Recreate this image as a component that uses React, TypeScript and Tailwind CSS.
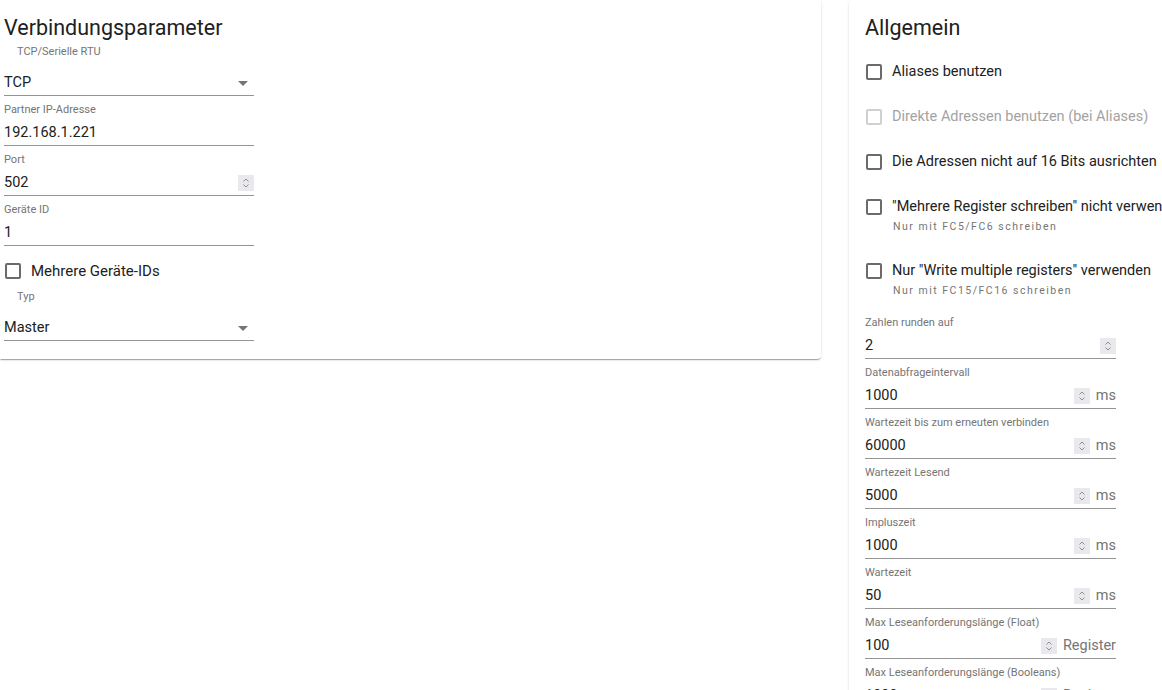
const font = { fontFamily: 'Roboto, "Liberation Sans", Arial, sans-serif' }

function Spinner() {
  return (
    <span className="flex h-[16px] w-[16px] shrink-0 items-center justify-center bg-[#e9e9ed]">
      <svg width="16" height="16" viewBox="0 0 16 16" fill="none">
        <path d="M5.5 6.5L8 4L10.5 6.5" stroke="#8f8f8f" strokeWidth="1" />
        <path d="M5.5 9.5L8 12L10.5 9.5" stroke="#8f8f8f" strokeWidth="1" />
      </svg>
    </span>
  )
}

function Arrow() {
  return (
    <svg width="24" height="24" viewBox="0 0 24 24" className="-mr-[1px] shrink-0">
      <path d="M7 10l5 5 5-5z" fill="#757575" />
    </svg>
  )
}

function Field({
  label,
  value,
  unit,
  spinner,
  width = 'w-[250px]',
  first,
}: {
  label: string
  value: string
  unit?: string
  spinner?: boolean
  width?: string
  first?: string
}) {
  return (
    <div className={width}>
      <div className={`${first ?? 'mt-[7px]'} h-[14px] text-[11px] leading-[14px] text-[#757575] whitespace-nowrap`}>
        {label}
      </div>
      <div className="flex h-[29px] items-center border-b border-[#949494] pt-[3px]">
        <span className="flex-1 text-[14.5px] text-[#212121]">{value}</span>
        {spinner && <Spinner />}
        {unit && <span className="ml-[6px] text-[14.5px] text-[#757575]">{unit}</span>}
      </div>
    </div>
  )
}

function Select({ label, value }: { label: string; value: string }) {
  return (
    <div className="w-[250px]">
      <div className="h-[14px] pl-[13px] text-[11px] leading-[14px] text-[#757575]">{label}</div>
      <div className="mt-[8px] flex h-[29px] items-center border-b border-[#949494] pt-[3px]">
        <span className="flex-1 text-[14.5px] text-[#212121]">{value}</span>
        <Arrow />
      </div>
    </div>
  )
}

function Check({ label, disabled, helper, mt }: { label: string; disabled?: boolean; helper?: string; mt: string }) {
  return (
    <div className={mt}>
      <div className="flex h-[18px] items-center whitespace-nowrap">
        <span
          className={`ml-[1px] h-[16px] w-[16px] shrink-0 rounded-[2px] border-2 ${
            disabled ? 'border-[#d0d0d0]' : 'border-[#6b6b6b]'
          }`}
        />
        <span className={`ml-[10px] text-[14.5px] ${disabled ? 'text-[#a3a3a3]' : 'text-[#212121]'}`}>{label}</span>
      </div>
      {helper && (
        <div className="ml-[28px] mt-[5px] h-[12px] text-[10.5px] leading-[12px] tracking-[1.5px] text-[#757575] whitespace-nowrap">
          {helper}
        </div>
      )}
    </div>
  )
}

export default function App() {
  return (
    <div className="flex h-[690px] w-[1162px] items-start gap-[28px] overflow-hidden bg-white" style={font}>
      <section className="w-[821px] shrink-0 rounded-br-[4px] pb-[18px] pl-1 pt-[14px] shadow-[0_2px_1px_-1px_rgba(0,0,0,0.2),0_1px_1px_0_rgba(0,0,0,0.14),0_1px_3px_0_rgba(0,0,0,0.12)]">
        <h2 className="h-[28px] text-[21.5px] leading-[28px] text-[#212121]">Verbindungsparameter</h2>
        <div className="mt-[3px]">
          <Select label="TCP/Serielle RTU" value="TCP" />
        </div>
        <Field label="Partner IP-Adresse" value="192.168.1.221" />
        <Field label="Port" value="502" spinner />
        <Field label="Geräte ID" value="1" />
        <div className="mt-[16px] flex h-[18px] items-center">
          <span className="ml-[1px] h-[16px] w-[16px] rounded-[2px] border-2 border-[#6b6b6b]" />
          <span className="ml-[10px] text-[15px] text-[#212121]">Mehrere Geräte-IDs</span>
        </div>
        <div className="mt-[10px]">
          <Select label="Typ" value="Master" />
        </div>
      </section>

      <section className="h-[720px] w-[340px] shrink-0 rounded-[4px] pl-4 pt-[14px] shadow-[0_2px_1px_-1px_rgba(0,0,0,0.2),0_1px_1px_0_rgba(0,0,0,0.14),0_1px_3px_0_rgba(0,0,0,0.12)]">
        <h2 className="h-[28px] text-[21.5px] leading-[28px] text-[#212121]">Allgemein</h2>
        <Check mt="mt-[21px]" label="Aliases benutzen" />
        <Check mt="mt-[27px]" label="Direkte Adressen benutzen (bei Aliases)" disabled />
        <Check mt="mt-[27px]" label="Die Adressen nicht auf 16 Bits ausrichten" />
        <Check mt="mt-[27px]" label={'"Mehrere Register schreiben" nicht verwenden'} helper="Nur mit FC5/FC6 schreiben" />
        <Check mt="mt-[29px]" label={'Nur "Write multiple registers" verwenden'} helper="Nur mit FC15/FC16 schreiben" />
        <Field first="mt-[19px]" width="w-[251px]" label="Zahlen runden auf" value="2" spinner />
        <Field width="w-[251px]" label="Datenabfrageintervall" value="1000" spinner unit="ms" />
        <Field width="w-[251px]" label="Wartezeit bis zum erneuten verbinden" value="60000" spinner unit="ms" />
        <Field width="w-[251px]" label="Wartezeit Lesend" value="5000" spinner unit="ms" />
        <Field width="w-[251px]" label="Impluszeit" value="1000" spinner unit="ms" />
        <Field width="w-[251px]" label="Wartezeit" value="50" spinner unit="ms" />
        <Field width="w-[251px]" label="Max Leseanforderungslänge (Float)" value="100" spinner unit="Register" />
        <Field width="w-[251px]" label="Max Leseanforderungslänge (Booleans)" value="1000" spinner unit="Register" />
      </section>
    </div>
  )
}
